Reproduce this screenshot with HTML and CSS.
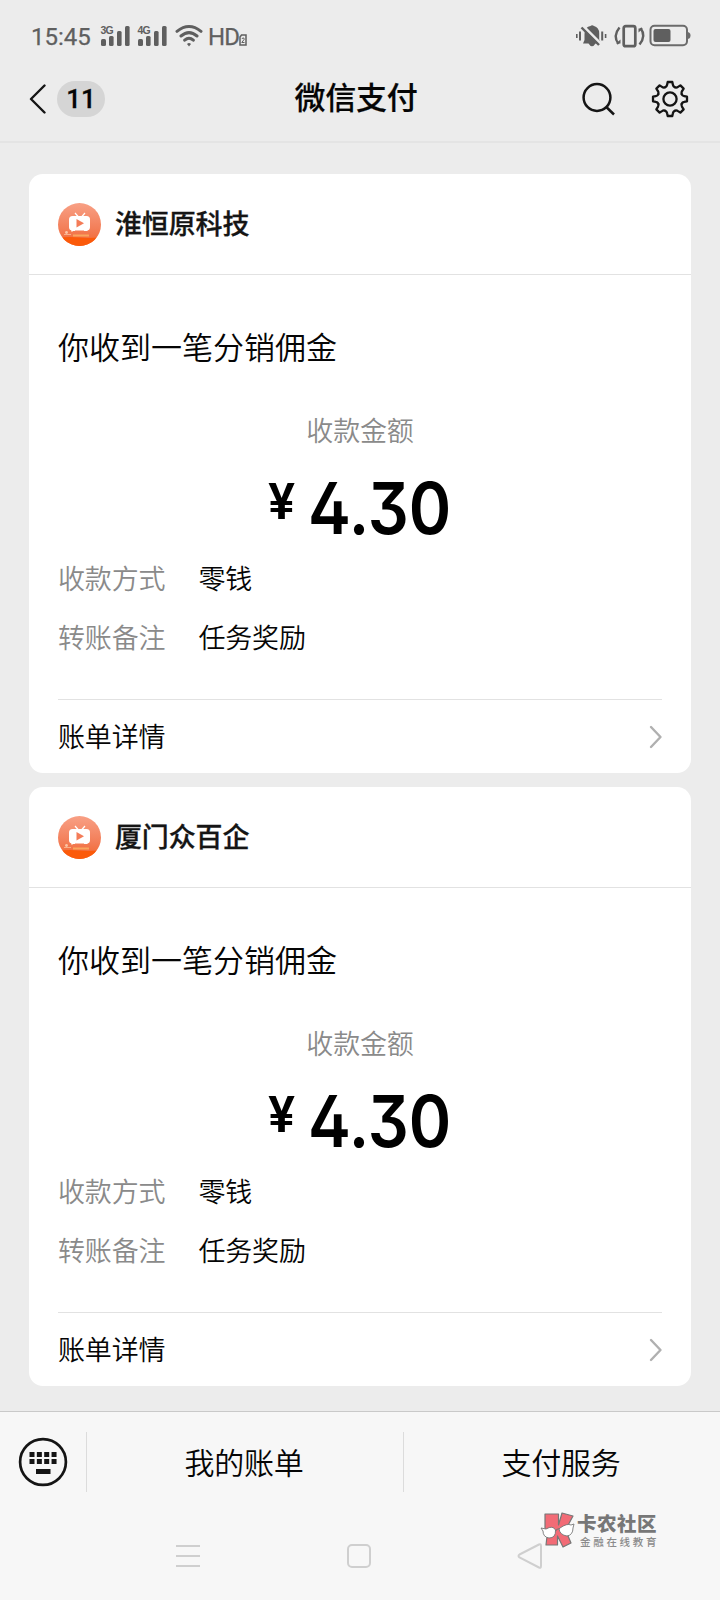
FILE: index.html
```html
<!DOCTYPE html>
<html lang="zh-CN">
<head>
<meta charset="utf-8">
<title>微信支付</title>
<link rel="stylesheet" href="styles.css">
</head>
<body>
<svg width="0" height="0" class="defs">
  <defs>
    <linearGradient id="coral" x1="0" y1="0" x2="0" y2="1"><stop offset="0" stop-color="#f8a085"/><stop offset=".6" stop-color="#f37e58"/><stop offset="1" stop-color="#f2642c"/></linearGradient>
    <clipPath id="round"><circle cx="21.5" cy="21.5" r="21.5"/></clipPath>
    <symbol id="avatar" viewBox="0 0 43 43">
      <g clip-path="url(#round)">
        <rect width="43" height="43" fill="url(#coral)"/>
        <path d="M0 35Q10 33.500 21 34.500T43 34V43H0Z" fill="#fb5a0a"/>
        <path d="M15 32.500h16" stroke="#f9a55e" stroke-width="1.800"/>
        <circle cx="8.500" cy="29.500" r="1.400" fill="#fbc4a6"/><circle cx="14" cy="28" r="1" fill="#fbc4a6"/><path d="M6 31.500h7" stroke="#f9b08a"/>
      </g>
      <path d="M17 10l3.500 4M27 10l-3.500 4" stroke="#fff" stroke-width="1.200"/>
      <rect x="11" y="13" width="21" height="14.500" rx="3.500" fill="#fff"/>
      <path d="M13 27h4v1h-3ZM26 27h4l-1 1h-3Z" fill="#fff"/>
      <path d="M18.500 16v8.600l7.500-4.300z" fill="#f47c58"/>
    </symbol>
    <symbol id="chevron" viewBox="0 0 14 26"><path d="M2 3l9.500 10L2 23" fill="none" stroke="#b0b0b0" stroke-width="2.400" stroke-linecap="round" stroke-linejoin="round"/></symbol>
    <path id="tooth" d="M-4.900-11.700C-3.700-12.200-3.100-13-2.900-14.200L-2.300-17H2.300L2.900-14.200C3.100-13 3.700-12.200 4.900-11.700"/>
  </defs>
</svg>
<header class="top">
  <div class="status">
    <span class="time">15:45</span>
    <svg class="signals" width="68" height="24" viewBox="0 0 68 24" fill="#5f5f5f">
      <rect x="1" y="15" width="5" height="7" rx="1.500"/><rect x="9" y="12" width="4.600" height="10" rx="1.500"/><rect x="17" y="7" width="4.600" height="15" rx="1.500"/><rect x="25" y="2" width="4.600" height="20" rx="1.500"/>
      <rect x="38" y="15" width="5" height="7" rx="1.500"/><rect x="46" y="12" width="4.600" height="10" rx="1.500"/><rect x="54" y="7" width="4.600" height="15" rx="1.500"/><rect x="62" y="2" width="4.600" height="20" rx="1.500"/>
      <text x=".500" y="10" class="net">3G</text><text x="37.500" y="10" class="net">4G</text>
    </svg>
    <svg class="wifi" width="28" height="24" viewBox="0 0 28 24" fill="none" stroke="#5f5f5f" stroke-width="3" stroke-linecap="round">
      <path d="M2 7.300Q14-2.300 26 7.300M6 12Q14 5.200 22 12M9.700 16.200Q14 12.200 18.300 16.200"/><path d="M12 20Q14 18.200 16 20L14 22.500Z" fill="#5f5f5f" stroke="none"/>
    </svg>
    <span class="hd">HD</span>
    <svg class="hd-two" width="8" height="12" viewBox="0 0 8 12"><path d="M2.500 1H7V11H1V3Z" fill="none" stroke="#5f5f5f" stroke-width="1.500"/><path d="M2.800 4.500Q5.500 3 5.200 5.300L2.800 8.500H5.500" fill="none" stroke="#5f5f5f"/></svg>
    <svg class="tray" width="116" height="26" viewBox="0 0 116 26">
      <g fill="#5f5f5f"><path d="M8 20.500L9.500 17V11Q10 3.500 15.500 3Q17 1.500 19 3Q24 4.500 24.200 10V16.500L26 20.500H20.500Q17 26 13.500 20.500Z"/>
      <rect x="1" y="11" width="1.600" height="4"/><rect x="4" y="8.500" width="2" height="9"/><rect x="26.200" y="8.500" width="2" height="9"/><rect x="29.800" y="11" width="1.600" height="4"/></g>
      <path d="M9 4L26.500 21.500" stroke="#ececec" stroke-width="3"/><path d="M6.500 4.500L24 22" stroke="#5f5f5f" stroke-width="2.400"/>
      <rect x="48.700" y="3.200" width="11.600" height="20" rx="2" fill="none" stroke="#5f5f5f" stroke-width="2.700"/>
      <path d="M44.500 4.500Q37.500 13 43.500 21M64.500 21.500Q71.500 13 65.500 5" fill="none" stroke="#5f5f5f" stroke-width="2.400"/>
      <path d="M41 20.500h4.500v-4M68 5.500h-4.500v4" fill="#5f5f5f"/>
      <rect x="75.500" y="2.700" width="36.500" height="19.500" rx="4" fill="none" stroke="#6b6b6b" stroke-width="2"/><rect x="78.500" y="6" width="17" height="13" rx="2" fill="#5f5f5f"/><path d="M112 9q3.500 0 3.500 3.500t-3.500 3.500z" fill="#6b6b6b"/>
    </svg>
  </div>
  <div class="titlebar">
    <div class="back">
      <svg width="18" height="32" viewBox="0 0 18 32"><path d="M16.500 2.500L3 16L16.500 29.500" fill="none" stroke="#151515" stroke-width="2.400" stroke-linecap="round" stroke-linejoin="round"/></svg>
      <span class="count">11</span>
    </div>
    <h1 class="title">微信支付</h1>
    <div class="actions">
      <svg width="34" height="36" viewBox="0 0 34 36" fill="none" stroke="#151515" stroke-width="2.500"><circle cx="15" cy="16.500" r="13.400"/><path d="M24.300 26L32 33.500"/></svg>
      <svg width="38" height="38" viewBox="-19 -19 38 38" fill="none" stroke="#151515" stroke-width="2.300" stroke-linejoin="round" stroke-linecap="round">
        <use href="#tooth"/><use href="#tooth" transform="rotate(45)"/><use href="#tooth" transform="rotate(90)"/><use href="#tooth" transform="rotate(135)"/><use href="#tooth" transform="rotate(180)"/><use href="#tooth" transform="rotate(225)"/><use href="#tooth" transform="rotate(270)"/><use href="#tooth" transform="rotate(315)"/><circle r="6.600"/>
      </svg>
    </div>
  </div>
</header>
<main class="feed">
  <article class="card">
    <div class="merchant"><svg class="avatar"><use href="#avatar"/></svg><h2 class="name">淮恒原科技</h2></div>
    <div class="body">
      <p class="subject">你收到一笔分销佣金</p>
      <p class="label amount-label">收款金额</p>
      <p class="amount"><span class="yen">¥</span><span class="value">4.30</span></p>
      <p class="row"><span class="label">收款方式</span><span>零钱</span></p>
      <p class="row"><span class="label">转账备注</span><span>任务奖励</span></p>
      <div class="detail"><span class="detail-text">账单详情</span><svg class="chevron"><use href="#chevron"/></svg></div>
    </div>
  </article>
  <article class="card">
    <div class="merchant"><svg class="avatar"><use href="#avatar"/></svg><h2 class="name">厦门众百企</h2></div>
    <div class="body">
      <p class="subject">你收到一笔分销佣金</p>
      <p class="label amount-label">收款金额</p>
      <p class="amount"><span class="yen">¥</span><span class="value">4.30</span></p>
      <p class="row"><span class="label">收款方式</span><span>零钱</span></p>
      <p class="row"><span class="label">转账备注</span><span>任务奖励</span></p>
      <div class="detail"><span class="detail-text">账单详情</span><svg class="chevron"><use href="#chevron"/></svg></div>
    </div>
  </article>
</main>
<footer class="bottom">
  <div class="menu">
    <div class="keyboard"><svg width="50" height="50" viewBox="0 0 50 50"><circle cx="25" cy="25" r="22.900" fill="none" stroke="#151515" stroke-width="2.700"/><path d="M11.500 17.500h28M11.500 24.500h28" stroke="#151515" stroke-width="5" stroke-dasharray="5 2.350"/><path d="M18 34.500h14.500" stroke="#151515" stroke-width="5"/></svg></div>
    <div class="menu-item">我的账单</div>
    <div class="menu-item">支付服务</div>
  </div>
  <div class="nav">
    <svg width="26" height="28" viewBox="0 0 26 28"><path d="M1 4h24M1 14h24M1 24h24" stroke="#cfcfcf" stroke-width="2"/></svg>
    <svg width="26" height="28" viewBox="0 0 26 28"><rect x="2" y="3" width="22" height="22" rx="4" fill="none" stroke="#cfcfcf" stroke-width="2"/></svg>
    <svg width="26" height="28" viewBox="0 0 26 28"><path d="M2.500 12.500L22 2.500Q24 1.500 24 4V24Q24 26.500 22 25.500L2.500 15.500Q.500 14 2.500 12.500Z" fill="none" stroke="#cfcfcf" stroke-width="2"/></svg>
  </div>
  <div class="watermark">
    <svg width="36" height="36" viewBox="0 0 36 36" stroke="#777" stroke-width="1.200" stroke-linejoin="round">
      <path d="M5 2H18.500V13L22 1L33 4L25.500 18L31 31L23 35L17.500 24V33H6L7.500 20L5 17Z" fill="#f26b76"/>
      <path d="M1 16L6 17Q13 13 15.500 18Q16 26 9 26Q3 25 3 19ZM20 16Q27 11 31 13L34 12L33 16Q33 23 27 24Q20 23 19 17Z" fill="#fff" stroke-width=".9"/><path d="M15.500 19Q17.500 16 19.500 17" fill="none"/>
    </svg>
    <div class="wm-text"><span class="wm-main">卡农社区</span><span class="wm-sub">金融在线教育</span></div>
  </div>
</footer>
</body>
</html>
```

FILE: styles.css
```css
* { box-sizing: border-box; }
body { margin: 0; width: 720px; height: 1600px; display: flex; flex-direction: column; overflow: hidden; background: #ececec; color: #050505; font-family: "Noto Sans CJK SC", sans-serif; font-weight: 350; }
h1, h2, p { margin: 0; }
svg { display: block; flex: none; }
.defs { position: absolute; }
.top { height: 143px; flex: none; border-bottom: 2px solid #e4e4e4; }
.status { height: 72px; padding: 0 29px 0 31px; display: flex; align-items: center; color: #5f5f5f; font: 24px/28px Roboto, sans-serif; -webkit-text-stroke: .25px #5f5f5f; }
.time { width: 69px; padding-top: 1px; }
.net { font: bold 10.500px "Liberation Sans", sans-serif; letter-spacing: -.8px; }
.wifi { margin-left: 7px; }
.hd { margin-left: 5px; width: 31px; letter-spacing: -.8px; padding-top: 1px; }
.hd-two { margin-top: 8px; }
.tray { margin-left: auto; }
.titlebar { height: 54px; display: grid; grid-template-columns: 200px 1fr 200px; align-items: center; }
.back { display: flex; align-items: center; padding-left: 28px; gap: 11px; }
.count { width: 48px; height: 36px; border-radius: 18px; background: #d5d5d5; font: 500 26px/37px Roboto, sans-serif; text-align: center; -webkit-text-stroke: .3px #0c0c0c; }
.title { margin-left: -8px; padding-bottom: 6px; text-align: center; font-size: 31px; line-height: 40px; font-weight: 500; letter-spacing: -.3px; -webkit-text-stroke: .2px #0c0c0c; }
.actions { display: flex; align-items: center; gap: 35px; justify-content: flex-end; padding-right: 31px; }
.feed { flex: 1; padding: 31px 29px 0; display: flex; flex-direction: column; gap: 14px; }
.card { height: 599px; flex: none; border-radius: 14px; background: #fff; font-size: 27px; line-height: 40px; letter-spacing: -.15px; }
.merchant { height: 101px; border-bottom: 1px solid #e2e2e2; display: flex; align-items: center; gap: 14px; padding-left: 29px; }
.avatar { width: 43px; height: 43px; }
.name { padding-bottom: 2px; font-size: 27px; line-height: 40px; font-weight: 500; color: #151515; -webkit-text-stroke: .3px #151515; }
.body { padding: 48px 29px 0; }
.subject { font-size: 31px; line-height: 46px; letter-spacing: 0; }
.label { color: #8a8a8a; }
.amount-label { margin-top: 41px; text-align: center; }
.amount { height: 86px; margin-top: 12px; display: flex; justify-content: center; align-items: flex-start; gap: 13px; font-family: Inter, Roboto, sans-serif; font-weight: 600; letter-spacing: 0; color: #000; }
.yen { padding-top: 10px; font-size: 50px; line-height: 60px; font-family: Roboto, sans-serif; }
.value { margin-right: -15px; padding-top: 3px; font-size: 71.500px; line-height: 86px; font-feature-settings: "cv09", "ss01"; transform: scaleX(.9); transform-origin: left; }
.row { display: flex; gap: 33px; margin-top: 10px; }
.row + .row { margin-top: 19px; }
.detail { margin-top: 42px; border-top: 1px solid #e2e2e2; height: 74px; display: flex; align-items: center; justify-content: space-between; }
.detail-text { padding-bottom: 2px; }
.chevron { width: 14px; height: 26px; margin-right: -1px; }
.bottom { position: relative; height: 189px; flex: none; background: #f7f7f7; border-top: 1px solid #c9c9c9; }
.menu { padding-top: 20px; height: 80px; display: grid; grid-template-columns: 86px 317px 317px; font-size: 30px; line-height: 58px; letter-spacing: -.3px; }
.keyboard { padding: 5px 0 0 18px; }
.menu-item { border-left: 1px solid #dcdcdc; padding-right: 2px; text-align: center; }
.nav { height: 109px; display: flex; justify-content: space-between; padding: 50px 177px 0 175px; }
.watermark { position: absolute; left: 540px; top: 100px; display: flex; gap: 1px; color: #777; }
.wm-text { display: flex; flex-direction: column; padding-top: 1px; }
.wm-main { font-size: 19.500px; line-height: 20px; font-weight: 900; letter-spacing: .5px; }
.wm-sub { font-size: 10.500px; line-height: 15px; letter-spacing: 2.700px; padding: 1px 0 0 3px; color: #8b8b8b; font-weight: 500; }
```
